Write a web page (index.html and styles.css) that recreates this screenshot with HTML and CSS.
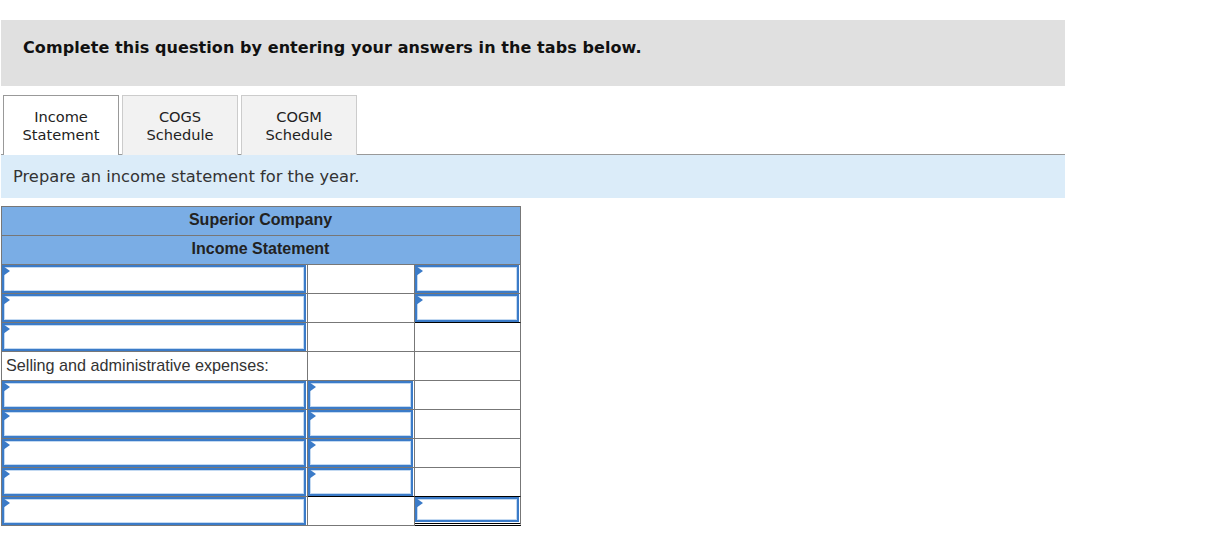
FILE: index.html
```html
<!DOCTYPE html>
<html>
<head>
<meta charset="utf-8">
<link rel="stylesheet" href="styles.css">
</head>
<body>
<div class="page">
  <div class="banner">Complete this question by entering your answers in the tabs below.</div>
  <div class="tabs">
    <div class="tab active">Income<br>Statement</div>
    <div class="tab">COGS<br>Schedule</div>
    <div class="tab">COGM<br>Schedule</div>
  </div>
  <div class="instruction">Prepare an income statement for the year.</div>
  <table class="stmt">
    <colgroup><col class="c1"><col class="c2"><col class="c3"></colgroup>
    <tr><th colspan="3" class="head">Superior Company</th></tr>
    <tr><th colspan="3" class="head">Income Statement</th></tr>
    <tr><td><div class="inp"></div></td><td></td><td><div class="inp"></div></td></tr>
    <tr><td><div class="inp"></div></td><td></td><td class="under"><div class="inp"></div></td></tr>
    <tr><td><div class="inp"></div></td><td></td><td></td></tr>
    <tr><td class="label">Selling and administrative expenses:</td><td></td><td></td></tr>
    <tr><td><div class="inp"></div></td><td><div class="inp"></div></td><td></td></tr>
    <tr><td><div class="inp"></div></td><td><div class="inp"></div></td><td></td></tr>
    <tr><td><div class="inp"></div></td><td><div class="inp"></div></td><td></td></tr>
    <tr><td><div class="inp"></div></td><td class="under"><div class="inp"></div></td><td class="under"></td></tr>
    <tr><td><div class="inp"></div></td><td></td><td class="dbl"><div class="inp"></div></td></tr>
  </table>
</div>
</body>
</html>
```
FILE: styles.css
```css
html, body {
  margin: 0;
  padding: 0;
  background: #fff;
}
.page {
  width: 1064px;
  padding-left: 1px;
  padding-top: 20px;
}
.banner {
  height: 66px;
  box-sizing: border-box;
  background: #e0e0e0;
  padding: 18px 22px 0;
  font-family: "DejaVu Sans", Verdana, sans-serif;
  font-weight: bold;
  font-size: 16px;
  letter-spacing: 0.08px;
  line-height: 20px;
  color: #111;
}
.tabs {
  display: flex;
  gap: 3px;
  margin-top: 9px;
  padding-left: 2px;
  border-bottom: 1px solid #999;
  height: 59px;
}
.tab {
  width: 116px;
  height: 60px;
  box-sizing: border-box;
  border: 1px solid #ccc;
  border-bottom: none;
  background: #f2f2f2;
  display: flex;
  align-items: center;
  justify-content: center;
  text-align: center;
  font-family: "DejaVu Sans", Verdana, sans-serif;
  font-size: 14.6px;
  line-height: 18px;
  color: #222;
}
.tab.active {
  background: #fff;
  border-color: #999;
  position: relative;
  z-index: 1;
}
.instruction {
  height: 43px;
  box-sizing: border-box;
  background: #dbecf9;
  padding: 12px 12px 0;
  font-family: "DejaVu Sans", Verdana, sans-serif;
  font-size: 16.3px;
  line-height: 20px;
  color: #333;
}
.stmt {
  margin-top: 8px;
  border-collapse: separate;
  border-spacing: 0;
  border-top: 1px solid #777;
  border-left: 1px solid #777;
  table-layout: fixed;
  width: 519px;
}
.c1 { width: 306px; }
.c2 { width: 107px; }
.c3 { width: 106px; }
.stmt th, .stmt td {
  border-right: 1px solid #777;
  border-bottom: 1px solid #777;
  height: 28px;
  padding: 0 1px 0 0;
  box-sizing: border-box;
}
.stmt th.head {
  background: #7aade5;
  font-family: "Liberation Sans", Arial, sans-serif;
  font-weight: bold;
  font-size: 16px;
  color: #222;
  text-align: center;
  height: 29px;
  padding-bottom: 2px;
}
.stmt td { height: 29px; vertical-align: top; }
.stmt td.label {
  font-family: "Liberation Sans", Arial, sans-serif;
  font-size: 16.2px;
  color: #333;
  padding-left: 4px;
  padding-bottom: 2px;
  vertical-align: middle;
}
.stmt td.under { border-bottom-color: #000; }
.stmt td.dbl { border-bottom: 3px double #000; height: 29px; }
.inp {
  position: relative;
  height: 28px;
  box-sizing: border-box;
  border: 2px solid #3b7bc8;
  box-shadow: inset 0 0 0 1px #c3d9f1;
  background: #fff;
}
.dbl .inp { height: 25px; }
.inp::before {
  content: "";
  position: absolute;
  left: -1px;
  top: -1px;
  border-left: 7px solid #3b7bc8;
  border-top: 5px solid transparent;
  border-bottom: 5px solid transparent;
}
```
